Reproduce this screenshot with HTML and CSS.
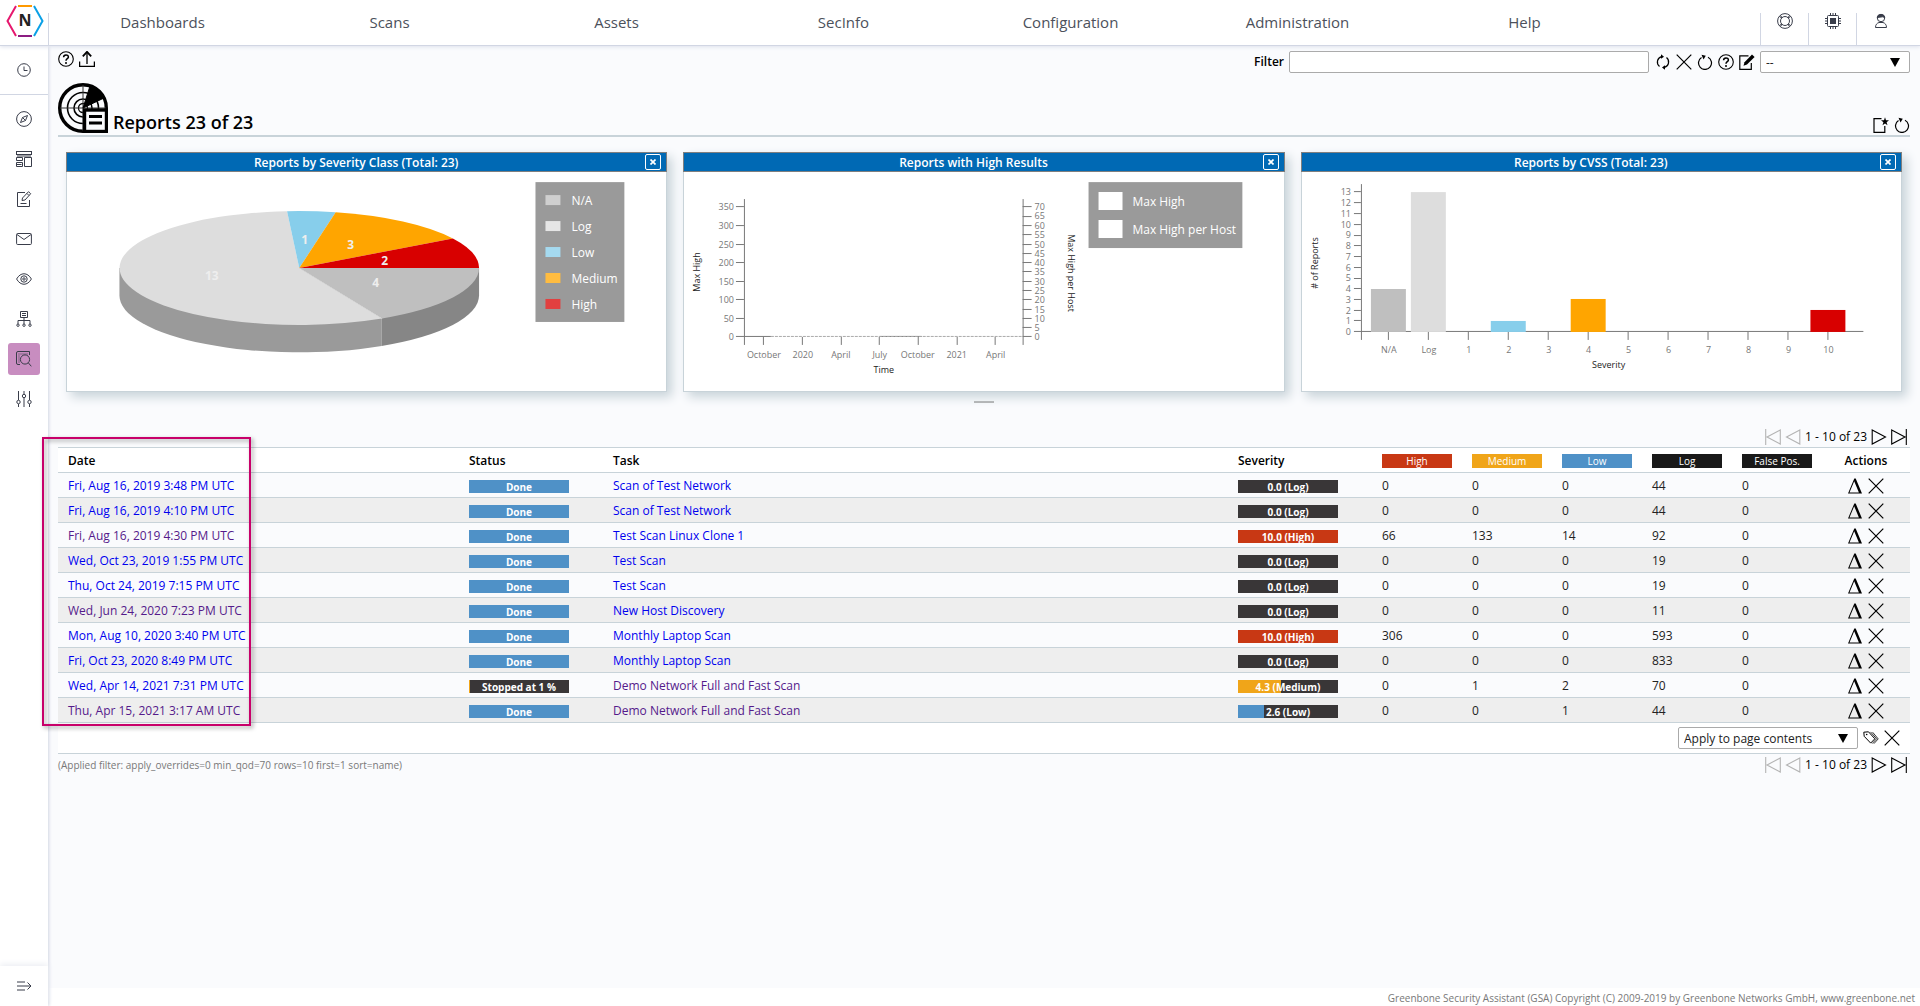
FILE: index.html
```html
<!DOCTYPE html>
<html lang="en">
<head>
<meta charset="utf-8">
<title>Greenbone Security Assistant</title>
<link rel="stylesheet" href="styles.css">
</head>
<body>
<svg class="sprite" aria-hidden="true">
  <symbol id="i-help" viewBox="0 0 16 16"><circle cx="8" cy="8" r="7.3" fill="none" stroke="currentColor" stroke-width="1.1"/><path d="M5.6 6.2c0-3 4.8-3 4.8-.3C10.400 7.700 8 7.600 8 9.800" fill="none" stroke="currentColor" stroke-width="1.5"/><circle cx="8" cy="12" r="1"/></symbol>
  <symbol id="i-upload" viewBox="0 0 16 16"><path d="M.6 10.500v5h14.800v-5M8 13V2" fill="none" stroke="currentColor" stroke-width="1.300"/><path d="M3.800 5.300 8 .8l4.200 4.500" fill="none" stroke="currentColor" stroke-width="1.800"/></symbol>
  <symbol id="i-refresh" viewBox="0 0 16 16"><path d="M6.500 2.600A5.700 5.700 0 0 0 4.500 12.500M9.500 13.400A5.700 5.700 0 0 0 11.500 3.500" fill="none" stroke="currentColor" stroke-width="1.200"/><path d="M6 .2 9 2.700 6 4.800zM10 11.200v4.600l-3-2.300z"/></symbol>
  <symbol id="i-x" viewBox="0 0 16 16"><path d="M.7.700 15.300 15.300M15.300.700.700 15.300" fill="none" stroke="currentColor" stroke-width="1.200"/></symbol>
  <symbol id="i-reset" viewBox="0 0 16 16"><path d="M4.500 3.500A6.500 6.500 0 1 0 11 3.200" fill="none" stroke="currentColor" stroke-width="1.200"/><path d="M4.500.800 8.800 1.800 6.500 5.400z"/></symbol>
  <symbol id="i-edit" viewBox="0 0 16 16"><path d="M9.500 1.800H.8v13.500h11.500V9" fill="none" stroke="currentColor" stroke-width="1.200"/><path d="m4.500 11.800 1-3.600L13 .6l2.600 2.300-7.600 7.600z"/></symbol>
  <symbol id="i-new" viewBox="0 0 16 16"><path d="M8.500 1.600H1v13.800h10.800V9" fill="none" stroke="currentColor" stroke-width="1.200"/><path d="m12 .3 1 3h3L13.600 5.200l.9 3.100L12 6.500 9.500 8.300l.9-3.100L8 3.300h3z"/></symbol>
  <symbol id="i-delta" viewBox="0 0 16 16"><path fill-rule="evenodd" d="M7.300.500h1.400L15 15.500H1zM7.200 3.200 2.500 14.400h9.400z"/></symbol>
  <symbol id="i-tag" viewBox="0 0 16 16"><path d="M.8 2.200 5.500 1.800l6.300 7-4.100 4.300L1.200 6.300z" fill="none" stroke="currentColor"/><path d="m7.500 1.900 6 6.900-4.200 4.700M9.600 2.200l5.600 6.700-4.300 4.800" fill="none" stroke="currentColor" stroke-width=".8"/><circle cx="3.700" cy="4.500" r=".8"/></symbol>
  <symbol id="i-next" viewBox="0 0 16 16"><path d="M1.200 1 14.500 8 1.200 15z" fill="none" stroke="currentColor" stroke-width="1.100"/></symbol>
  <symbol id="i-last" viewBox="0 0 16 16"><path d="M.7 1 14 8 .7 15zM15.300 0v16" fill="none" stroke="currentColor" stroke-width="1.100"/></symbol>
  <symbol id="i-prev" viewBox="0 0 16 16"><path d="M14.800 1 1.500 8l13.300 7z" fill="none" stroke="currentColor" stroke-width="1.100"/></symbol>
  <symbol id="i-first" viewBox="0 0 16 16"><path d="M15.300 1 2 8l13.300 7zM.7 0v16" fill="none" stroke="currentColor" stroke-width="1.100"/></symbol>
</svg>

<header class="topbar">
  <a class="logo" href="#" aria-label="Home">
    <svg width="38" height="34" viewBox="0 0 38 34" fill="none" stroke-width="2">
      <path d="M10 2 1.500 17 10 32" stroke="#e6186e"/><path d="M28 2 36.500 17 28 32" stroke="#0aa0e6"/>
      <path d="M12 2h14" stroke="#f90"/><path d="M12 32h14" stroke="#8c1d82"/>
      <text x="19" y="22" class="logo-letter">N</text>
    </svg>
  </a>
  <nav class="menu">
    <a href="#">Dashboards</a><a href="#">Scans</a><a href="#">Assets</a><a href="#">SecInfo</a><a href="#">Configuration</a><a href="#">Administration</a><a href="#">Help</a>
  </nav>
  <div class="tools">
    <button aria-label="Support"><svg width="16" height="16" viewBox="0 0 16 16" fill="none" stroke="currentColor"><circle cx="8" cy="8" r="7.400"/><circle cx="8" cy="8" r="4.500"/><path d="M2.500 3.500 5 5.200M3.500 2.500 5.200 5M13.500 3.500 11 5.200M12.500 2.500 10.800 5M2.500 12.500 5 10.800M3.500 13.500 5.200 11M13.500 12.500 11 10.800M12.500 13.500 10.800 11"/></svg></button>
    <button aria-label="System"><svg width="16" height="16" viewBox="0 0 16 16" fill="none" stroke="currentColor"><rect x="2.500" y="2.500" width="11" height="11" rx="1"/><rect x="5.500" y="5.500" width="5" height="5" fill="currentColor"/><path d="M5.500 0v2M8 0v2M10.500 0v2M5.500 14v2M8 14v2M10.500 14v2M0 5.500h2M0 8h2M0 10.500h2M14 5.500h2M14 8h2M14 10.500h2"/></svg></button>
    <button aria-label="User"><svg width="16" height="16" viewBox="0 0 16 16" fill="none" stroke="currentColor"><circle cx="8" cy="5" r="3.700"/><path d="M4.200 4.500C5 .5 11 .5 11.800 4.500L9.500 3.800z" fill="currentColor"/><path d="M2.500 14.500c0-3 1.500-4.300 3.500-5h4c2 .7 3.500 2 3.500 5z"/></svg></button>
  </div>
</header>

<div class="shell">
  <aside class="sidebar">
    <div class="side-top"><a href="#" aria-label="Recent"><svg width="14" height="14" viewBox="0 0 14 14" fill="none" stroke="currentColor"><circle cx="7" cy="7" r="6.300"/><path d="M7 3.500V7.500h3.500"/></svg></a></div>
    <nav class="side-nav">
      <a href="#" aria-label="Discover"><svg width="16" height="16" viewBox="0 0 16 16" fill="none" stroke="currentColor"><circle cx="8" cy="8" r="7.400"/><path d="m11.500 4.500-2 5-5 2 2-5zM6.500 6.500l3 3"/></svg></a>
      <a href="#" aria-label="Dashboard"><svg width="16" height="16" viewBox="0 0 16 16" fill="none" stroke="currentColor"><rect x=".5" y=".5" width="15" height="3"/><path d="M1 5h14" stroke-width="2" opacity=".5"/><path d="M.5 6.500h6v3h-6zM.5 11.500h6v4h-6zM8.500 6.500h7v9h-7zM.5 13.500h5"/></svg></a>
      <a href="#" aria-label="Notes"><svg width="16" height="16" viewBox="0 0 16 16" fill="none" stroke="currentColor"><path d="M9 1.500H1.500v14h12V9M4.500 12.500h6M6 9.500 6.500 7l6-6.300 2.200 2L9 9zM11 2.500l2 2"/></svg></a>
      <a href="#" aria-label="Mail"><svg width="16" height="16" viewBox="0 0 16 16" fill="none" stroke="currentColor"><rect x=".6" y="2.500" width="14.800" height="11" rx="1"/><path d="m1 3.500 7 5 7-5"/></svg></a>
      <a href="#" aria-label="Watch"><svg width="16" height="16" viewBox="0 0 16 16" fill="none" stroke="currentColor"><path d="M.6 8C4.500 1 11.500 1 15.400 8 11.500 15 4.500 15 .6 8z"/><circle cx="8" cy="8" r="3.200"/><circle cx="8" cy="8" r="1.200"/></svg></a>
      <a href="#" aria-label="Network"><svg width="16" height="16" viewBox="0 0 16 16" fill="none" stroke="currentColor"><path d="M4.500.5h7v6h-7zM6 2.500h4M6 4.500h4M8 6.500V13M2 13V9.500h12V13"/><circle cx="2" cy="14.200" r="1.200"/><circle cx="8" cy="14.200" r="1.200"/><circle cx="14" cy="14.200" r="1.200"/></svg></a>
      <a href="#" class="active" aria-label="Scans"><svg width="16" height="16" viewBox="0 0 16 16" fill="none" stroke="currentColor"><path d="M13.500 4V.5H2Q.5.500.5 2v10q0 1.500 1.500 1.500h2"/><path d="M2.500 3h9M2.500 5h2M2.500 7h1M2.500 9h1M2.500 11h1" stroke-dasharray="1 1"/><circle cx="9" cy="8.500" r="4.600"/><path d="m12.300 11.800 3 3.500"/></svg></a>
      <a href="#" aria-label="Settings"><svg width="16" height="16" viewBox="0 0 16 16" fill="none" stroke="currentColor"><path d="M2.500 0v9M2.500 13v3M8 0v3M8 7v9M13.500 0v9M13.500 13v3"/><circle cx="2.500" cy="11" r="1.700"/><circle cx="8" cy="5" r="1.700"/><circle cx="13.500" cy="11" r="1.700"/></svg></a>
    </nav>
    <button class="side-expand" aria-label="Expand"><svg width="16" height="16" viewBox="0 0 16 16" fill="none" stroke="currentColor"><path d="M1 4h8M1 8h14M1 12h8M11.500 4.500 15 8l-3.500 3.500"/></svg></button>
  </aside>

  <main class="content">
    <div class="page">
      <div class="toolbar">
        <div class="icons wide">
          <button aria-label="Help"><svg class="ic"><use href="#i-help"/></svg></button>
          <button aria-label="Upload"><svg class="ic"><use href="#i-upload"/></svg></button>
        </div>
        <form class="filter">
          <label for="filter">Filter</label>
          <input id="filter" type="text">
          <div class="icons">
            <button type="button" aria-label="Update"><svg class="ic"><use href="#i-refresh"/></svg></button>
            <button type="button" aria-label="Remove"><svg class="ic"><use href="#i-x"/></svg></button>
            <button type="button" aria-label="Reset"><svg class="ic"><use href="#i-reset"/></svg></button>
            <button type="button" aria-label="Filter help"><svg class="ic"><use href="#i-help"/></svg></button>
            <button type="button" aria-label="Edit"><svg class="ic"><use href="#i-edit"/></svg></button>
          </div>
          <div class="select saved"><select aria-label="Saved filter"><option>--</option></select></div>
        </form>
      </div>

      <div class="title">
        <svg width="50" height="50" viewBox="0 0 50 50" fill="none" stroke="#000">
          <circle cx="25" cy="25" r="23.300" stroke-width="3.400"/><circle cx="25" cy="25" r="15.500" stroke-width="1.600"/><circle cx="25" cy="25" r="9" stroke-width="1.600"/><circle cx="25" cy="25" r="4.500" stroke-width="1.300"/>
          <path d="M25 2v46M2 25h46" stroke-width="1" stroke="#333"/>
          <path d="M25 25 32 3C38 5 43 9 46 15z" fill="#000"/>
          <rect x="26.500" y="27" width="22" height="21.500" fill="#fafbfd" stroke-width="3.400"/><path d="M31 33.500h13M31 40h13" stroke-width="3"/>
        </svg>
        <h1>Reports 23 of 23</h1>
        <div class="icons wide">
          <button aria-label="Add display"><svg class="ic"><use href="#i-new"/></svg></button>
          <button aria-label="Reset displays"><svg class="ic"><use href="#i-reset"/></svg></button>
        </div>
      </div>

      <div class="cards">
        <section class="card">
          <header><h2>Reports by Severity Class (Total: 23)</h2><button aria-label="Close"><svg width="6" height="6" viewBox="0 0 6 6"><path d="m.5.500 5 5m0-5-5 5" stroke="#fff" stroke-width="1.700"/></svg></button></header>
          <svg class="chart" width="600" height="219" viewBox="67 172 600 219">
            <path d="M119.500 268v27.500A180 57 0 0 0 382 346.100V318.600L299.500 268z" fill="#9a9a9a"/>
            <path d="M479.500 268v27.500A180 57 0 0 1 382 346.100V318.600z" fill="#868686"/>
            <path d="M299.500 268H479.500A180 57 0 0 1 382.300 318.600z" fill="#bfbfbf"/>
            <path d="M299.500 268 382.300 318.600A180 57 0 1 1 287.300 211.100z" fill="#ddd"/>
            <path d="M299.500 268 287.300 211.100A180 57 0 0 1 336 212.200z" fill="#87ceeb"/>
            <path d="M299.500 268 336 212.200A180 57 0 0 1 453.300 238.400z" fill="#ffa500"/>
            <path d="M299.500 268 453.300 238.400A180 57 0 0 1 479.500 268z" fill="#d80000"/>
            <g class="slice"><text x="212" y="280">13</text><text x="305" y="244">1</text><text x="351" y="249">3</text><text x="385" y="265">2</text><text x="376" y="287">4</text></g>
            <rect x="536" y="182" width="89" height="140" fill="#9a9a9a"/>
            <g><rect x="546" y="195" width="15" height="10" fill="#cfcfcf"/><rect x="546" y="221" width="15" height="10" fill="#e6e6e6"/><rect x="546" y="247" width="15" height="10" fill="#a5daf0"/><rect x="546" y="273" width="15" height="10" fill="#ffbc40"/><rect x="546" y="299" width="15" height="10" fill="#e24040"/></g>
            <g class="legend"><text x="572" y="205">N/A</text><text x="572" y="231">Log</text><text x="572" y="257">Low</text><text x="572" y="283">Medium</text><text x="572" y="309">High</text></g>
          </svg>
        </section>

        <section class="card">
          <header><h2>Reports with High Results</h2><button aria-label="Close"><svg width="6" height="6" viewBox="0 0 6 6"><path d="m.5.500 5 5m0-5-5 5" stroke="#fff" stroke-width="1.700"/></svg></button></header>
          <svg class="chart" width="600" height="219" viewBox="684 172 600 219">
            <path class="axis" d="M744.500 199V345M736 206.500h8M736 225.500h8M736 244.500h8M736 262.500h8M736 281.500h8M736 299.500h8M736 318.500h8M736 336.500h35M880 336.500h42M1023.500 199V345M1023 206.500h9M1023 216.500h9M1023 225.500h9M1023 234.500h9M1023 244.500h9M1023 253.500h9M1023 262.500h9M1023 271.500h9M1023 281.500h9M1023 290.500h9M1023 299.500h9M1023 309.500h9M1023 318.500h9M1023 327.500h9M1023 336.500h9M763.500 337v8M802.500 337v8M841.500 337v8M879.500 337v8M918.500 337v8M957.500 337v8M995.500 337v8"/>
            <path d="M771 336.500H1023" stroke="#aaa" stroke-dasharray="3 1"/>
            <g class="tick end"><text x="734" y="210">350</text><text x="734" y="229">300</text><text x="734" y="248">250</text><text x="734" y="266">200</text><text x="734" y="285">150</text><text x="734" y="303">100</text><text x="734" y="322">50</text><text x="734" y="340">0</text></g>
            <g class="tick"><text x="1035" y="210">70</text><text x="1035" y="219">65</text><text x="1035" y="229">60</text><text x="1035" y="238">55</text><text x="1035" y="248">50</text><text x="1035" y="257">45</text><text x="1035" y="266">40</text><text x="1035" y="275">35</text><text x="1035" y="285">30</text><text x="1035" y="294">25</text><text x="1035" y="303">20</text><text x="1035" y="313">15</text><text x="1035" y="322">10</text><text x="1035" y="331">5</text><text x="1035" y="340">0</text></g>
            <g class="tick mid"><text x="764" y="358">October</text><text x="803" y="358">2020</text><text x="841" y="358">April</text><text x="880" y="358">July</text><text x="918" y="358">October</text><text x="957" y="358">2021</text><text x="996" y="358">April</text></g>
            <g class="axis-name"><text x="884" y="373">Time</text><text transform="translate(700 272) rotate(-90)">Max High</text><text transform="translate(1068 273) rotate(90)">Max High per Host</text></g>
            <rect x="1089" y="182" width="154" height="66" fill="#9a9a9a"/><path d="M1099 192h24v18h-24zM1099 220h24v18h-24z" fill="#fff"/>
            <g class="legend"><text x="1133" y="206">Max High</text><text x="1133" y="234">Max High per Host</text></g>
          </svg>
        </section>

        <section class="card">
          <header><h2>Reports by CVSS (Total: 23)</h2><button aria-label="Close"><svg width="6" height="6" viewBox="0 0 6 6"><path d="m.5.500 5 5m0-5-5 5" stroke="#fff" stroke-width="1.700"/></svg></button></header>
          <svg class="chart" width="600" height="219" viewBox="1302 172 600 219">
            <path class="axis" d="M1361.500 184V340M1354 331.500H1864M1354 320.500h7M1354 310.500h7M1354 299.500h7M1354 288.500h7M1354 278.500h7M1354 267.500h7M1354 256.500h7M1354 245.500h7M1354 235.500h7M1354 224.500h7M1354 213.500h7M1354 202.500h7M1354 191.500h7M1388.500 332v8M1428.500 332v8M1468.500 332v8M1508.500 332v8M1548.500 332v8M1588.500 332v8M1628.500 332v8M1668.500 332v8M1708.500 332v8M1748.500 332v8M1788.500 332v8M1828.500 332v8"/>
            <rect x="1371" y="289" width="35" height="43" fill="#bfbfbf"/><rect x="1411" y="192" width="35" height="140" fill="#ddd"/><rect x="1491" y="321" width="35" height="11" fill="#87ceeb"/><rect x="1571" y="299" width="35" height="33" fill="#ffa500"/><rect x="1811" y="310" width="35" height="22" fill="#d80000"/>
            <g class="tick end"><text x="1351" y="335">0</text><text x="1351" y="324">1</text><text x="1351" y="314">2</text><text x="1351" y="303">3</text><text x="1351" y="292">4</text><text x="1351" y="281">5</text><text x="1351" y="271">6</text><text x="1351" y="260">7</text><text x="1351" y="249">8</text><text x="1351" y="238">9</text><text x="1351" y="228">10</text><text x="1351" y="217">11</text><text x="1351" y="206">12</text><text x="1351" y="195">13</text></g>
            <g class="tick mid"><text x="1389" y="353">N/A</text><text x="1429" y="353">Log</text><text x="1469" y="353">1</text><text x="1509" y="353">2</text><text x="1549" y="353">3</text><text x="1589" y="353">4</text><text x="1629" y="353">5</text><text x="1669" y="353">6</text><text x="1709" y="353">7</text><text x="1749" y="353">8</text><text x="1789" y="353">9</text><text x="1829" y="353">10</text></g>
            <g class="axis-name"><text x="1609" y="368">Severity</text><text transform="translate(1318 263) rotate(-90)"># of Reports</text></g>
          </svg>
        </section>
      </div>
      <div class="grip"></div>

      <div class="pager">
        <button class="off" disabled aria-label="First"><svg class="ic"><use href="#i-first"/></svg></button><button class="off" disabled aria-label="Previous"><svg class="ic"><use href="#i-prev"/></svg></button><span>1 - 10 of 23</span><button aria-label="Next"><svg class="ic"><use href="#i-next"/></svg></button><button aria-label="Last"><svg class="ic"><use href="#i-last"/></svg></button>
      </div>

      <div class="table-wrap">
        <table class="reports">
          <colgroup><col class="c-date"><col class="c-bar"><col><col class="c-bar"><col class="c-num"><col class="c-num"><col class="c-num"><col class="c-num"><col class="c-num"><col class="c-act"></colgroup>
          <thead><tr><th>Date</th><th>Status</th><th>Task</th><th>Severity</th><th><span class="badge high">High</span></th><th><span class="badge medium">Medium</span></th><th><span class="badge low">Low</span></th><th><span class="badge log">Log</span></th><th><span class="badge log">False Pos.</span></th><th class="act">Actions</th></tr></thead>
          <tbody>
            <tr><td><a href="#">Fri, Aug 16, 2019 3:48 PM UTC</a></td><td><div class="bar low">Done</div></td><td><a href="#">Scan of Test Network</a></td><td><div class="bar">0.0 (Log)</div></td><td>0</td><td>0</td><td>0</td><td>44</td><td>0</td><td><div class="acts"><button aria-label="Compare"><svg class="ic"><use href="#i-delta"/></svg></button><button aria-label="Delete"><svg class="ic"><use href="#i-x"/></svg></button></div></td></tr>
            <tr><td><a href="#">Fri, Aug 16, 2019 4:10 PM UTC</a></td><td><div class="bar low">Done</div></td><td><a href="#">Scan of Test Network</a></td><td><div class="bar">0.0 (Log)</div></td><td>0</td><td>0</td><td>0</td><td>44</td><td>0</td><td><div class="acts"><button aria-label="Compare"><svg class="ic"><use href="#i-delta"/></svg></button><button aria-label="Delete"><svg class="ic"><use href="#i-x"/></svg></button></div></td></tr>
            <tr><td><a class="seen" href="#">Fri, Aug 16, 2019 4:30 PM UTC</a></td><td><div class="bar low">Done</div></td><td><a href="#">Test Scan Linux Clone 1</a></td><td><div class="bar high">10.0 (High)</div></td><td>66</td><td>133</td><td>14</td><td>92</td><td>0</td><td><div class="acts"><button aria-label="Compare"><svg class="ic"><use href="#i-delta"/></svg></button><button aria-label="Delete"><svg class="ic"><use href="#i-x"/></svg></button></div></td></tr>
            <tr><td><a href="#">Wed, Oct 23, 2019 1:55 PM UTC</a></td><td><div class="bar low">Done</div></td><td><a href="#">Test Scan</a></td><td><div class="bar">0.0 (Log)</div></td><td>0</td><td>0</td><td>0</td><td>19</td><td>0</td><td><div class="acts"><button aria-label="Compare"><svg class="ic"><use href="#i-delta"/></svg></button><button aria-label="Delete"><svg class="ic"><use href="#i-x"/></svg></button></div></td></tr>
            <tr><td><a href="#">Thu, Oct 24, 2019 7:15 PM UTC</a></td><td><div class="bar low">Done</div></td><td><a href="#">Test Scan</a></td><td><div class="bar">0.0 (Log)</div></td><td>0</td><td>0</td><td>0</td><td>19</td><td>0</td><td><div class="acts"><button aria-label="Compare"><svg class="ic"><use href="#i-delta"/></svg></button><button aria-label="Delete"><svg class="ic"><use href="#i-x"/></svg></button></div></td></tr>
            <tr><td><a class="seen" href="#">Wed, Jun 24, 2020 7:23 PM UTC</a></td><td><div class="bar low">Done</div></td><td><a href="#">New Host Discovery</a></td><td><div class="bar">0.0 (Log)</div></td><td>0</td><td>0</td><td>0</td><td>11</td><td>0</td><td><div class="acts"><button aria-label="Compare"><svg class="ic"><use href="#i-delta"/></svg></button><button aria-label="Delete"><svg class="ic"><use href="#i-x"/></svg></button></div></td></tr>
            <tr><td><a href="#">Mon, Aug 10, 2020 3:40 PM UTC</a></td><td><div class="bar low">Done</div></td><td><a href="#">Monthly Laptop Scan</a></td><td><div class="bar high">10.0 (High)</div></td><td>306</td><td>0</td><td>0</td><td>593</td><td>0</td><td><div class="acts"><button aria-label="Compare"><svg class="ic"><use href="#i-delta"/></svg></button><button aria-label="Delete"><svg class="ic"><use href="#i-x"/></svg></button></div></td></tr>
            <tr><td><a href="#">Fri, Oct 23, 2020 8:49 PM UTC</a></td><td><div class="bar low">Done</div></td><td><a href="#">Monthly Laptop Scan</a></td><td><div class="bar">0.0 (Log)</div></td><td>0</td><td>0</td><td>0</td><td>833</td><td>0</td><td><div class="acts"><button aria-label="Compare"><svg class="ic"><use href="#i-delta"/></svg></button><button aria-label="Delete"><svg class="ic"><use href="#i-x"/></svg></button></div></td></tr>
            <tr><td><a href="#">Wed, Apr 14, 2021 7:31 PM UTC</a></td><td><div class="bar part-medium" style="--fill:1%">Stopped at 1 %</div></td><td><a class="seen" href="#">Demo Network Full and Fast Scan</a></td><td><div class="bar part-medium" style="--fill:43%">4.3 (Medium)</div></td><td>0</td><td>1</td><td>2</td><td>70</td><td>0</td><td><div class="acts"><button aria-label="Compare"><svg class="ic"><use href="#i-delta"/></svg></button><button aria-label="Delete"><svg class="ic"><use href="#i-x"/></svg></button></div></td></tr>
            <tr><td><a class="seen" href="#">Thu, Apr 15, 2021 3:17 AM UTC</a></td><td><div class="bar low">Done</div></td><td><a class="seen" href="#">Demo Network Full and Fast Scan</a></td><td><div class="bar part-low" style="--fill:26%">2.6 (Low)</div></td><td>0</td><td>0</td><td>1</td><td>44</td><td>0</td><td><div class="acts"><button aria-label="Compare"><svg class="ic"><use href="#i-delta"/></svg></button><button aria-label="Delete"><svg class="ic"><use href="#i-x"/></svg></button></div></td></tr>
          </tbody>
        </table>
        <div class="callout"></div>
      </div>
      <div class="bulk">
        <div class="select apply"><select aria-label="Bulk scope"><option>Apply to page contents</option></select></div>
        <div class="icons wide"><button aria-label="Tag"><svg class="ic"><use href="#i-tag"/></svg></button><button aria-label="Delete"><svg class="ic"><use href="#i-x"/></svg></button></div>
      </div>
      <div class="below">
        <span class="applied">(Applied filter: apply_overrides=0 min_qod=70 rows=10 first=1 sort=name)</span>
        <div class="pager">
          <button class="off" disabled aria-label="First"><svg class="ic"><use href="#i-first"/></svg></button><button class="off" disabled aria-label="Previous"><svg class="ic"><use href="#i-prev"/></svg></button><span>1 - 10 of 23</span><button aria-label="Next"><svg class="ic"><use href="#i-next"/></svg></button><button aria-label="Last"><svg class="ic"><use href="#i-last"/></svg></button>
        </div>
      </div>
    </div>
    <footer class="footer">Greenbone Security Assistant (GSA) Copyright (C) 2009-2019 by Greenbone Networks GmbH, www.greenbone.net</footer>
  </main>
</div>
</body>
</html>
```
FILE: styles.css
```css
* { box-sizing: border-box; }
body { margin: 0; min-height: 100vh; display: flex; flex-direction: column; background: #fff; color: #000; font: 12px/16px "Open Sans", "Noto Sans", sans-serif; }
button { margin: 0; padding: 0; border: 0; background: none; color: inherit; font: inherit; display: block; cursor: pointer; }
a { color: #0000ee; text-decoration: none; }
a.seen { color: #551a8b; }
svg { display: block; }
.sprite { width: 0; height: 0; position: absolute; }
.ic { width: 16px; height: 16px; fill: currentColor; }

.topbar { display: flex; height: 46px; border-bottom: 1px solid #d1d6e3; box-shadow: 0 1px 4px #dde1ec; background: #fff; position: relative; z-index: 1; }
.logo { width: 48px; padding: 4px 0 0 6px; }
.logo-letter { font: bold 16px "Open Sans", sans-serif; fill: #222; text-anchor: middle; }
.menu { flex: 1; display: flex; margin-right: 122px; border-left: 1px solid #d1d6e3; margin-top: 13px; }
.menu a { flex: 1; text-align: center; color: #4c515b; font-size: 15px; line-height: 18px; }
.tools { display: flex; margin: 13px 16px 0 0; color: #393d4a; }
.tools button { width: 48px; border-left: 1px solid #d1d6e3; display: flex; justify-content: center; align-items: flex-start; }

.shell { flex: 1; display: flex; }
.sidebar { width: 48px; flex: none; display: flex; flex-direction: column; background: #fff; color: #393d4a; box-shadow: 1px 0 3px #d1d6e3; position: relative; }
.sidebar a { color: inherit; display: flex; align-items: center; justify-content: center; }
.side-top { height: 49px; border-bottom: 1px solid #d1d6e3; display: grid; place-items: center; }
.side-nav { flex: 1; display: flex; flex-direction: column; align-items: center; gap: 8px; padding-top: 8px; }
.side-nav a { width: 32px; height: 32px; border-radius: 3px; }
.side-nav .active { background: #c88dc0; }
.side-expand { height: 40px; display: grid; place-items: center; box-shadow: 0 -2px 6px #eceef3; }

.content { flex: 1; min-width: 0; display: flex; flex-direction: column; background: #fafbfd; }
.page { flex: 1; padding: 5px 10px 0; }
.footer { height: 18px; background: #fff; color: #787878; font-size: 10px; line-height: 20px; text-align: right; padding-right: 5px; }

.icons { display: flex; gap: 5px; }
.toolbar { display: flex; justify-content: space-between; align-items: flex-start; }
.filter { display: flex; align-items: center; }
.filter label { font-weight: 600; margin-right: 5px; }
.filter input { width: 360px; height: 22px; border: 1px solid #aaa; border-radius: 2px; background: #fff; margin-right: 6px; font: inherit; }
.filter .icons { margin-right: 5px; }
.select { position: relative; height: 22px; }
.select select { appearance: none; width: 100%; height: 22px; margin: 0; padding: 1px 5px 0; border: 1px solid #aaa; border-radius: 2px; background: #fff; color: #222; font: inherit; display: block; }
.select::after { content: ""; position: absolute; right: 10px; top: 7px; border: 5px solid transparent; border-top: 9px solid #000; border-bottom: 0; pointer-events: none; }
.saved { width: 150px; }
.apply { width: 180px; }

.title { display: flex; align-items: flex-end; margin-top: 10px; padding-bottom: 2px; border-bottom: 2px solid #c8d3d9; }
.title h1 { margin: 0 auto 0 5px; font-size: 18px; font-weight: 600; line-height: 22px; }

.cards { display: flex; gap: 16px; padding: 0 8px; margin-top: 15px; }
.card { flex: 1; min-width: 0; border: 1px solid #c8d3d9; border-top: 0; background: #fff; box-shadow: 5px 5px 10px #c8d3d9; }
.card header { margin: 0 -1px; height: 20px; display: flex; align-items: center; background: #0069b4; border: 1px solid #7f7f7f; padding: 0 5px 0 0; color: #fff; }
.card h2 { flex: 1; margin: 0; padding-top: 2px; font-size: 12px; font-weight: 600; line-height: 16px; text-align: center; }
.card header button { width: 16px; height: 16px; border: 1px solid #fff; border-radius: 2px; display: grid; place-items: center; }
.chart { max-width: 100%; font-size: 10px; }
.axis { fill: none; stroke: #777; }
.slice { font-size: 12px; font-weight: 700; fill: #eee; text-anchor: middle; }
.legend { font-size: 12px; fill: #fff; }
.tick { fill: #777; font-size: 9px; }
.end { text-anchor: end; }
.mid { text-anchor: middle; }
.axis-name { fill: #222; font-size: 9px; text-anchor: middle; }
.grip { width: 20px; height: 2px; margin: 9px auto 0; background: #b0b0b0; }

.pager { display: flex; justify-content: flex-end; align-items: center; gap: 4px; padding-right: 3px; }
.grip + .pager { margin-top: 26px; }
.pager .off { color: #b4b4b4; }
.table-wrap { position: relative; margin-top: 2px; }
.reports { width: 100%; table-layout: fixed; border-collapse: collapse; border-top: 1px solid #c8d3d9; }
.reports tr { height: 25px; border-bottom: 1px solid #c8d3d9; }
.reports thead { background: #fff; }
.reports tbody tr:nth-child(even) { background: #eee; }
.reports th, .reports td { padding: 2px 10px 0; text-align: left; white-space: nowrap; }
.reports th { font-weight: 600; }
.reports .act { text-align: center; }
.reports td { color: #222; }
.c-date { width: 401px; }
.c-bar { width: 144px; }
.c-num { width: 90px; }
.c-act { width: 88px; }
.badge { display: block; width: 70px; height: 14px; color: #fff; font-size: 10px; font-weight: 400; line-height: 15px; text-align: center; }
.bar { width: 100px; height: 13px; background: #393637; color: #fff; font-size: 10px; font-weight: 700; line-height: 15px; text-align: center; }
.high { background: #c83814; }
.medium { background: #f0a519; }
.low { background: #4f91c7; }
.log { background: #191919; }
.part-medium { background: linear-gradient(90deg, #f0a519 var(--fill), #393637 var(--fill)); }
.part-low { background: linear-gradient(90deg, #4f91c7 var(--fill), #393637 var(--fill)); }
.acts { display: flex; justify-content: center; gap: 5px; margin-right: 2px; color: #000; }
.callout { position: absolute; left: -16px; top: -10px; bottom: -3px; width: 209px; border: 2px solid #c8006a; filter: drop-shadow(2px 2px 2px rgba(0, 0, 0, .4)); pointer-events: none; }
.bulk { height: 31px; display: flex; justify-content: flex-end; align-items: center; gap: 5px; padding-right: 10px; background: #fff; border-bottom: 1px solid #c8d3d9; }
.below { display: flex; justify-content: space-between; align-items: center; padding-top: 3px; }
.applied { color: #787878; font-size: 10px; }
```
